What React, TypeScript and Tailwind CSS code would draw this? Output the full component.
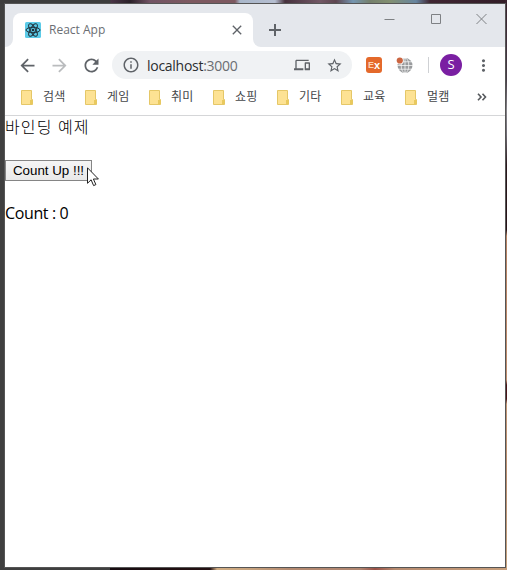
import React from "react";

const UI = "font-['Open_Sans','Noto_Sans_CJK_KR',sans-serif]";

const bookmarks = ["검색", "게임", "취미", "쇼핑", "기타", "교육", "멀캠"];

function Glyph({ d, size, className = "fill-[#5f6368]" }: { d: string; size: number; className?: string }) {
  return (
    <svg width={size} height={size} viewBox="0 0 24 24" className={`shrink-0 ${className}`}>
      <path d={d} />
    </svg>
  );
}

const PATHS = {
  back: "M20 11H7.83l5.59-5.59L12 4l-8 8 8 8 1.41-1.41L7.83 13H20v-2z",
  forward: "M12 4l-1.41 1.41L16.17 11H4v2h12.17l-5.58 5.59L12 20l8-8z",
  reload:
    "M17.65 6.35C16.2 4.9 14.21 4 12 4c-4.42 0-7.99 3.58-7.99 8s3.57 8 7.99 8c3.73 0 6.84-2.55 7.73-6h-2.08c-.82 2.33-3.04 4-5.65 4-3.31 0-6-2.69-6-6s2.69-6 6-6c1.66 0 3.14.69 4.22 1.78L13 11h7V4l-2.35 2.35z",
  info: "M11 17h2v-6h-2v6zm1-15C6.48 2 2 6.48 2 12s4.48 10 10 10 10-4.480 10-10S17.520 2 12 2zm0 18c-4.410 0-8-3.590-8-8s3.590-8 8-8 8 3.590 8 8-3.590 8-8 8zM11 9h2V7h-2v2z",
  devices:
    "M4 6h18V4H4c-1.1 0-2 .9-2 2v11H0v3h14v-3H4V6zm19 2h-6c-.55 0-1 .45-1 1v10c0 .55.45 1 1 1h6c.55 0 1-.45 1-1V9c0-.55-.45-1-1-1zm-1 9h-4v-7h4v7z",
  star: "M22 9.24l-7.19-.62L12 2 9.19 8.63 2 9.24l5.46 4.73L5.82 21 12 17.27 18.18 21l-1.63-7.03L22 9.24zM12 15.4l-3.76 2.27 1-4.28-3.32-2.88 4.38-.38L12 6.1l1.71 4.04 4.38.38-3.32 2.88 1 4.28L12 15.4z",
  close: "M19 6.41 17.59 5 12 10.59 6.41 5 5 6.41 10.59 12 5 17.59 6.41 19 12 13.41 17.59 19 19 17.59 13.41 12z",
  more: "M12 8c1.1 0 2-.9 2-2s-.9-2-2-2-2 .9-2 2 .9 2 2 2zm0 2c-1.1 0-2 .9-2 2s.9 2 2 2 2-.9 2-2-.9-2-2-2zm0 6c-1.1 0-2 .9-2 2s.9 2 2 2 2-.9 2-2-.9-2-2-2z",
};

function ReactMark() {
  return (
    <svg width="16" height="16" viewBox="0 0 16 16" className="shrink-0">
      <rect width="16" height="16" rx="1.5" fill="#5ccbe8" />
      <g fill="none" stroke="#20303a" strokeWidth="1">
        <ellipse cx="8" cy="8" rx="7" ry="2.7" />
        <ellipse cx="8" cy="8" rx="7" ry="2.7" transform="rotate(60 8 8)" />
        <ellipse cx="8" cy="8" rx="7" ry="2.7" transform="rotate(120 8 8)" />
      </g>
      <circle cx="8" cy="8" r="1.3" fill="#20303a" />
    </svg>
  );
}

function TabStrip() {
  return (
    <div className="flex h-[43px] shrink-0 bg-[#e4e7ec]">
      <svg width="8" height="43" viewBox="0 0 8 43" className="shrink-0">
        <path d="M8 35a8 8 0 0 1-8 8h8z" fill="#fff" />
      </svg>
      <div className="mt-[9px] flex h-[34px] w-60 shrink-0 items-center rounded-t-lg bg-white pr-2 pl-3">
        <ReactMark />
        <span className="ml-2 text-[12px] text-[#6b6e73]">React App</span>
        <span className="grow" />
        <Glyph d={PATHS.close} size={16} />
      </div>
      <svg width="8" height="43" viewBox="0 0 8 43" className="shrink-0">
        <path d="M0 35a8 8 0 0 0 8 8H0z" fill="#fff" />
      </svg>
      <svg width="12" height="12" viewBox="0 0 12 12" className="mt-5 ml-2 shrink-0">
        <path d="M6 0v12M0 6h12" stroke="#5f6368" strokeWidth="2" />
      </svg>
      <div className="mt-[9px] ml-auto flex h-3 gap-[35px] pr-[18px]">
        <svg width="11" height="12" viewBox="0 0 11 12"><path d="M.5 6.500h10" stroke="#7e8184" /></svg>
        <svg width="11" height="12" viewBox="0 0 11 12"><path d="M1.500 1.500h9v9h-9z" fill="none" stroke="#7e8184" /></svg>
        <svg width="11" height="12" viewBox="0 0 11 12"><path d="M.5 1l10 10M10.500 1l-10 10" stroke="#7e8184" /></svg>
      </div>
    </div>
  );
}

function Toolbar() {
  return (
    <div className="flex h-9 shrink-0 items-center pl-1.5">
      <span className="flex w-8 justify-center"><Glyph d={PATHS.back} size={21} /></span>
      <span className="flex w-8 justify-center"><Glyph d={PATHS.forward} size={21} className="fill-[#babcbe]" /></span>
      <span className="flex w-8 justify-center"><Glyph d={PATHS.reload} size={21} /></span>
      <div className="ml-[5px] flex h-7 w-60 shrink-0 items-center rounded-full bg-[#f0f2f4] pr-[9px] pl-2.5">
        <Glyph d={PATHS.info} size={18} />
        <span className="ml-[7px] text-[14px] tracking-[-0.28px] text-[#2b2d30]">
          localhost<span className="text-[#6a6d72]">:3000</span>
        </span>
        <span className="grow" />
        <Glyph d={PATHS.devices} size={16} />
        <span className="w-4" />
        <Glyph d={PATHS.star} size={17} />
      </div>
      <div className="ml-3.5 flex size-4 shrink-0 items-center justify-center rounded-[3px] bg-[#e4692b] font-['Liberation_Sans',sans-serif] text-[9px] leading-none font-bold text-[#ffd3b0]">
        E<span className="text-[11px] text-white">x</span>
      </div>
      <svg width="17" height="17" viewBox="0 0 17 17" className="ml-3.5 shrink-0">
        <circle cx="9" cy="8.500" r="7.500" fill="#999b9d" />
        <g fill="none" stroke="#fff" strokeWidth=".7">
          <ellipse cx="9" cy="8.500" rx="3.800" ry="7.500" />
          <path d="M9 1v16M1 8.500h16M2 4.800h14M2 12.200h14" />
        </g>
        <circle cx="3.800" cy="3.500" r="3.900" fill="#fff" />
        <circle cx="3.800" cy="3.500" r="3.100" fill="#cb6541" />
      </svg>
      <span className="ml-[15px] h-4 w-px bg-[#cfd1d4]" />
      <div className="ml-[11px] flex size-[22px] shrink-0 items-center justify-center rounded-full bg-[#7a1fa2] text-[13px] text-white">S</div>
      <span className="ml-3"><Glyph d={PATHS.more} size={19} /></span>
    </div>
  );
}

function BookmarksBar() {
  return (
    <div className="flex h-[33px] shrink-0 border-b border-[#d5d6d8] pl-[15px]">
      {bookmarks.map((name) => (
        <div key={name} className="flex h-[28px] w-16 shrink-0 items-center">
          <svg width="13" height="15" viewBox="0 0 13 15" className="shrink-0">
            <path d="M1.500.5h10v9h1v5h-11z" fill="#fde293" stroke="#e5c767" />
            <path d="M10 10h2.500v4H10z" fill="#e9c95d" />
          </svg>
          <span className="ml-2.5 text-[12px] tracking-[0.3px] text-[#45474a]">{name}</span>
        </div>
      ))}
      <svg width="10" height="8" viewBox="0 0 10 8" className="mt-2.5 ml-[9px]">
        <path d="M1 .7 4 4 1 7.300M5.500.7l3 3.300-3 3.300" fill="none" stroke="#55585c" strokeWidth="1.600" />
      </svg>
    </div>
  );
}

export default function App() {
  return (
    <div className={`relative flex h-[570px] w-[507px] overflow-hidden bg-[#3f3f3f] pt-1 pb-[3px] pl-[5px] ${UI}`}>
      {/* desktop wallpaper showing around the window */}
      <div className="absolute top-0 left-0 h-1 w-full bg-[linear-gradient(90deg,#3d3d3d_0_110px,#493446_111px,#2a2029_130px,#725465_150px,#7d5960_190px,#7d5960_235px,#a9b7ca_240px,#b5bed0_275px,#46313d_285px,#725865_320px,#5e4650_336px,#7596b1_353px,#75806c_370px,#829071_390px,#6685a0_416px,#402632_430px,#321d27_507px)]" />
      <div className="absolute top-0 right-0 h-full w-0.5 bg-[linear-gradient(180deg,#38212d_0,#493e49_80px,#88858b_110px,#706b75_135px,#2a171c_165px,#281318_230px,#b78263_236px,#c08e6f_380px,#4a1519_385px,#4a1519_399px,#c29675_404px,#b98d6e_480px,#c7a480_570px)]" />
      <div className="absolute right-0 bottom-0 h-0.5 w-[397px] bg-[linear-gradient(90deg,#170c10_0,#241012_100px,#d1ad83_107px,#c7a37e_140px,#b48a71_180px,#b18772_250px,#9a5147_265px,#b78b70_285px,#c79f7c_397px)]" />
      <div className="relative flex h-[563px] w-[500px] flex-col bg-white outline-1 outline-[#555]">
        <TabStrip />
        <Toolbar />
        <BookmarksBar />
        <main className="flex flex-col items-start text-black">
          <p className="text-[16px] leading-[22px] font-light tracking-[1.15px]">바인딩 예제</p>
          <button className="mt-[22px] h-[21px] w-[87px] border border-[#858585] bg-linear-to-b from-[#f5f5f5] to-[#e9e9e9] font-['Liberation_Sans',sans-serif] text-[13.33px] leading-none whitespace-nowrap">
            Count Up !!!
          </button>
          <p className="mt-[21px] text-[16px] leading-[22px] tracking-[-0.38px]">Count : 0</p>
        </main>
      </div>
      <svg width="12" height="20" viewBox="0 0 12 20" className="absolute top-[167px] left-[87px]">
        <path d="M.5.800v15.500l3.600-3.500 2.500 5.800 2.300-1-2.500-5.600h5z" fill="#fff" stroke="#222" />
      </svg>
    </div>
  );
}
